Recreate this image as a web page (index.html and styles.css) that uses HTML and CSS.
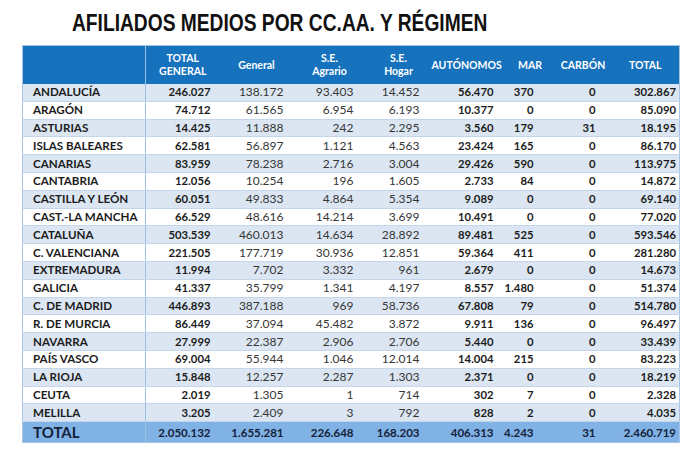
FILE: index.html
```html
<!DOCTYPE html>
<html lang="es">
<head>
<meta charset="utf-8">
<link rel="stylesheet" href="styles.css">
</head>
<body>
<div class="page">
  <div class="title-row"><h1 class="title">AFILIADOS MEDIOS POR CC.AA. Y RÉGIMEN</h1></div>
  <table class="grid">
    <colgroup>
      <col class="c-name"><col class="c-tg"><col class="c-gen"><col class="c-agr"><col class="c-hog"><col class="c-aut"><col class="c-mar"><col class="c-car"><col class="c-tot">
    </colgroup>
    <thead>
      <tr>
        <th></th><th>TOTAL<br>GENERAL</th><th>General</th><th>S.E.<br>Agrario</th><th>S.E.<br>Hogar</th><th>AUTÓNOMOS</th><th>MAR</th><th>CARBÓN</th><th>TOTAL</th>
      </tr>
    </thead>
    <tbody>
      <tr><td>ANDALUCÍA</td><td>246.027</td><td>138.172</td><td>93.403</td><td>14.452</td><td>56.470</td><td>370</td><td>0</td><td>302.867</td></tr>
      <tr><td>ARAGÓN</td><td>74.712</td><td>61.565</td><td>6.954</td><td>6.193</td><td>10.377</td><td>0</td><td>0</td><td>85.090</td></tr>
      <tr><td>ASTURIAS</td><td>14.425</td><td>11.888</td><td>242</td><td>2.295</td><td>3.560</td><td>179</td><td>31</td><td>18.195</td></tr>
      <tr><td>ISLAS BALEARES</td><td>62.581</td><td>56.897</td><td>1.121</td><td>4.563</td><td>23.424</td><td>165</td><td>0</td><td>86.170</td></tr>
      <tr><td>CANARIAS</td><td>83.959</td><td>78.238</td><td>2.716</td><td>3.004</td><td>29.426</td><td>590</td><td>0</td><td>113.975</td></tr>
      <tr><td>CANTABRIA</td><td>12.056</td><td>10.254</td><td>196</td><td>1.605</td><td>2.733</td><td>84</td><td>0</td><td>14.872</td></tr>
      <tr><td>CASTILLA Y LEÓN</td><td>60.051</td><td>49.833</td><td>4.864</td><td>5.354</td><td>9.089</td><td>0</td><td>0</td><td>69.140</td></tr>
      <tr><td>CAST.-LA MANCHA</td><td>66.529</td><td>48.616</td><td>14.214</td><td>3.699</td><td>10.491</td><td>0</td><td>0</td><td>77.020</td></tr>
      <tr><td>CATALUÑA</td><td>503.539</td><td>460.013</td><td>14.634</td><td>28.892</td><td>89.481</td><td>525</td><td>0</td><td>593.546</td></tr>
      <tr><td>C. VALENCIANA</td><td>221.505</td><td>177.719</td><td>30.936</td><td>12.851</td><td>59.364</td><td>411</td><td>0</td><td>281.280</td></tr>
      <tr><td>EXTREMADURA</td><td>11.994</td><td>7.702</td><td>3.332</td><td>961</td><td>2.679</td><td>0</td><td>0</td><td>14.673</td></tr>
      <tr><td>GALICIA</td><td>41.337</td><td>35.799</td><td>1.341</td><td>4.197</td><td>8.557</td><td>1.480</td><td>0</td><td>51.374</td></tr>
      <tr><td>C. DE MADRID</td><td>446.893</td><td>387.188</td><td>969</td><td>58.736</td><td>67.808</td><td>79</td><td>0</td><td>514.780</td></tr>
      <tr><td>R. DE MURCIA</td><td>86.449</td><td>37.094</td><td>45.482</td><td>3.872</td><td>9.911</td><td>136</td><td>0</td><td>96.497</td></tr>
      <tr><td>NAVARRA</td><td>27.999</td><td>22.387</td><td>2.906</td><td>2.706</td><td>5.440</td><td>0</td><td>0</td><td>33.439</td></tr>
      <tr><td>PAÍS VASCO</td><td>69.004</td><td>55.944</td><td>1.046</td><td>12.014</td><td>14.004</td><td>215</td><td>0</td><td>83.223</td></tr>
      <tr><td>LA RIOJA</td><td>15.848</td><td>12.257</td><td>2.287</td><td>1.303</td><td>2.371</td><td>0</td><td>0</td><td>18.219</td></tr>
      <tr><td>CEUTA</td><td>2.019</td><td>1.305</td><td>1</td><td>714</td><td>302</td><td>7</td><td>0</td><td>2.328</td></tr>
      <tr><td>MELILLA</td><td>3.205</td><td>2.409</td><td>3</td><td>792</td><td>828</td><td>2</td><td>0</td><td>4.035</td></tr>
    </tbody>
    <tfoot>
      <tr><td>TOTAL</td><td>2.050.132</td><td>1.655.281</td><td>226.648</td><td>168.203</td><td>406.313</td><td>4.243</td><td>31</td><td>2.460.719</td></tr>
    </tfoot>
  </table>
</div>
</body>
</html>
```

FILE: styles.css
```css
html, body {
  margin: 0;
  padding: 0;
  background: #ffffff;
}

.page {
  width: 700px;
  height: 454px;
  padding-top: 9px;
  box-sizing: border-box;
}

.title-row {
  height: 36px;
  padding-left: 72px;
}

.title {
  display: inline-block;
  margin: 0;
  font-family: "Liberation Sans", Arial, sans-serif;
  font-weight: bold;
  font-size: 24px;
  line-height: 28px;
  color: #111111;
  white-space: nowrap;
  transform: scaleX(0.8);
  transform-origin: left center;
}

.grid {
  margin-left: 22px;
  border-collapse: collapse;
  table-layout: fixed;
  width: 657px;
  font-family: Lato, "Open Sans", sans-serif;
  font-size: 12px;
  color: #1c1c1c;
  border: 1px solid #a9c4e2;
}

.c-name { width: 123px; }
.c-tg { width: 74px; }
.c-gen { width: 74px; }
.c-agr { width: 72px; }
.c-hog { width: 66px; }
.c-aut { width: 66px; }
.c-mar { width: 57px; }
.c-car { width: 57px; }
.c-tot { width: 68px; }

.grid th {
  background: #1772be;
  color: #ffffff;
  font-weight: bold;
  font-size: 10.5px;
  line-height: 13px;
  height: 38px;
  padding: 0;
  text-align: center;
  vertical-align: middle;
}

.grid th:nth-child(7) { padding-left: 8px; }

.grid th:first-child,
.grid td:first-child {
  border-right: 1px solid #9cc1e6;
}

.grid tbody td {
  height: 16.8px;
  padding: 0;
  border-bottom: 1px solid #c3d6ec;
  text-align: right;
  white-space: nowrap;
  line-height: 16px;
}

.grid tbody tr:nth-child(odd) td {
  background: #dbe6f2;
}

.grid tbody tr:nth-child(even) td {
  background: #ffffff;
}

.grid tbody td:first-child,
.grid tfoot td:first-child {
  text-align: left;
  padding-left: 10px;
  font-weight: bold;
}

.grid tbody td:first-child {
  font-size: 11.6px;
}

.grid td:nth-child(2),
.grid td:nth-child(6),
.grid td:nth-child(7),
.grid td:nth-child(8),
.grid td:nth-child(9) {
  font-weight: bold;
  font-size: 11.3px;
}

.grid td:nth-child(3),
.grid td:nth-child(4),
.grid td:nth-child(5) {
  color: #363636;
  font-size: 12px;
}

.grid td:nth-child(2) { padding-right: 9px; }
.grid td:nth-child(3) { padding-right: 10px; }
.grid td:nth-child(4) { padding-right: 12px; }
.grid td:nth-child(5) { padding-right: 12px; }
.grid td:nth-child(6) { padding-right: 4px; }
.grid td:nth-child(7) { padding-right: 21px; }
.grid td:nth-child(8) { padding-right: 16px; }
.grid td:nth-child(9) { padding-right: 3px; }

.grid tfoot td {
  background: #80b2e5;
  height: 20px;
  padding-top: 0;
  padding-bottom: 0;
  text-align: right;
  font-weight: bold;
  color: #14213a;
  white-space: nowrap;
}

.grid tfoot td:nth-child(n) {
  font-size: 11.5px;
  font-weight: bold;
  color: #14213a;
}

.grid tfoot td:first-child {
  font-size: 15px;
}
```
